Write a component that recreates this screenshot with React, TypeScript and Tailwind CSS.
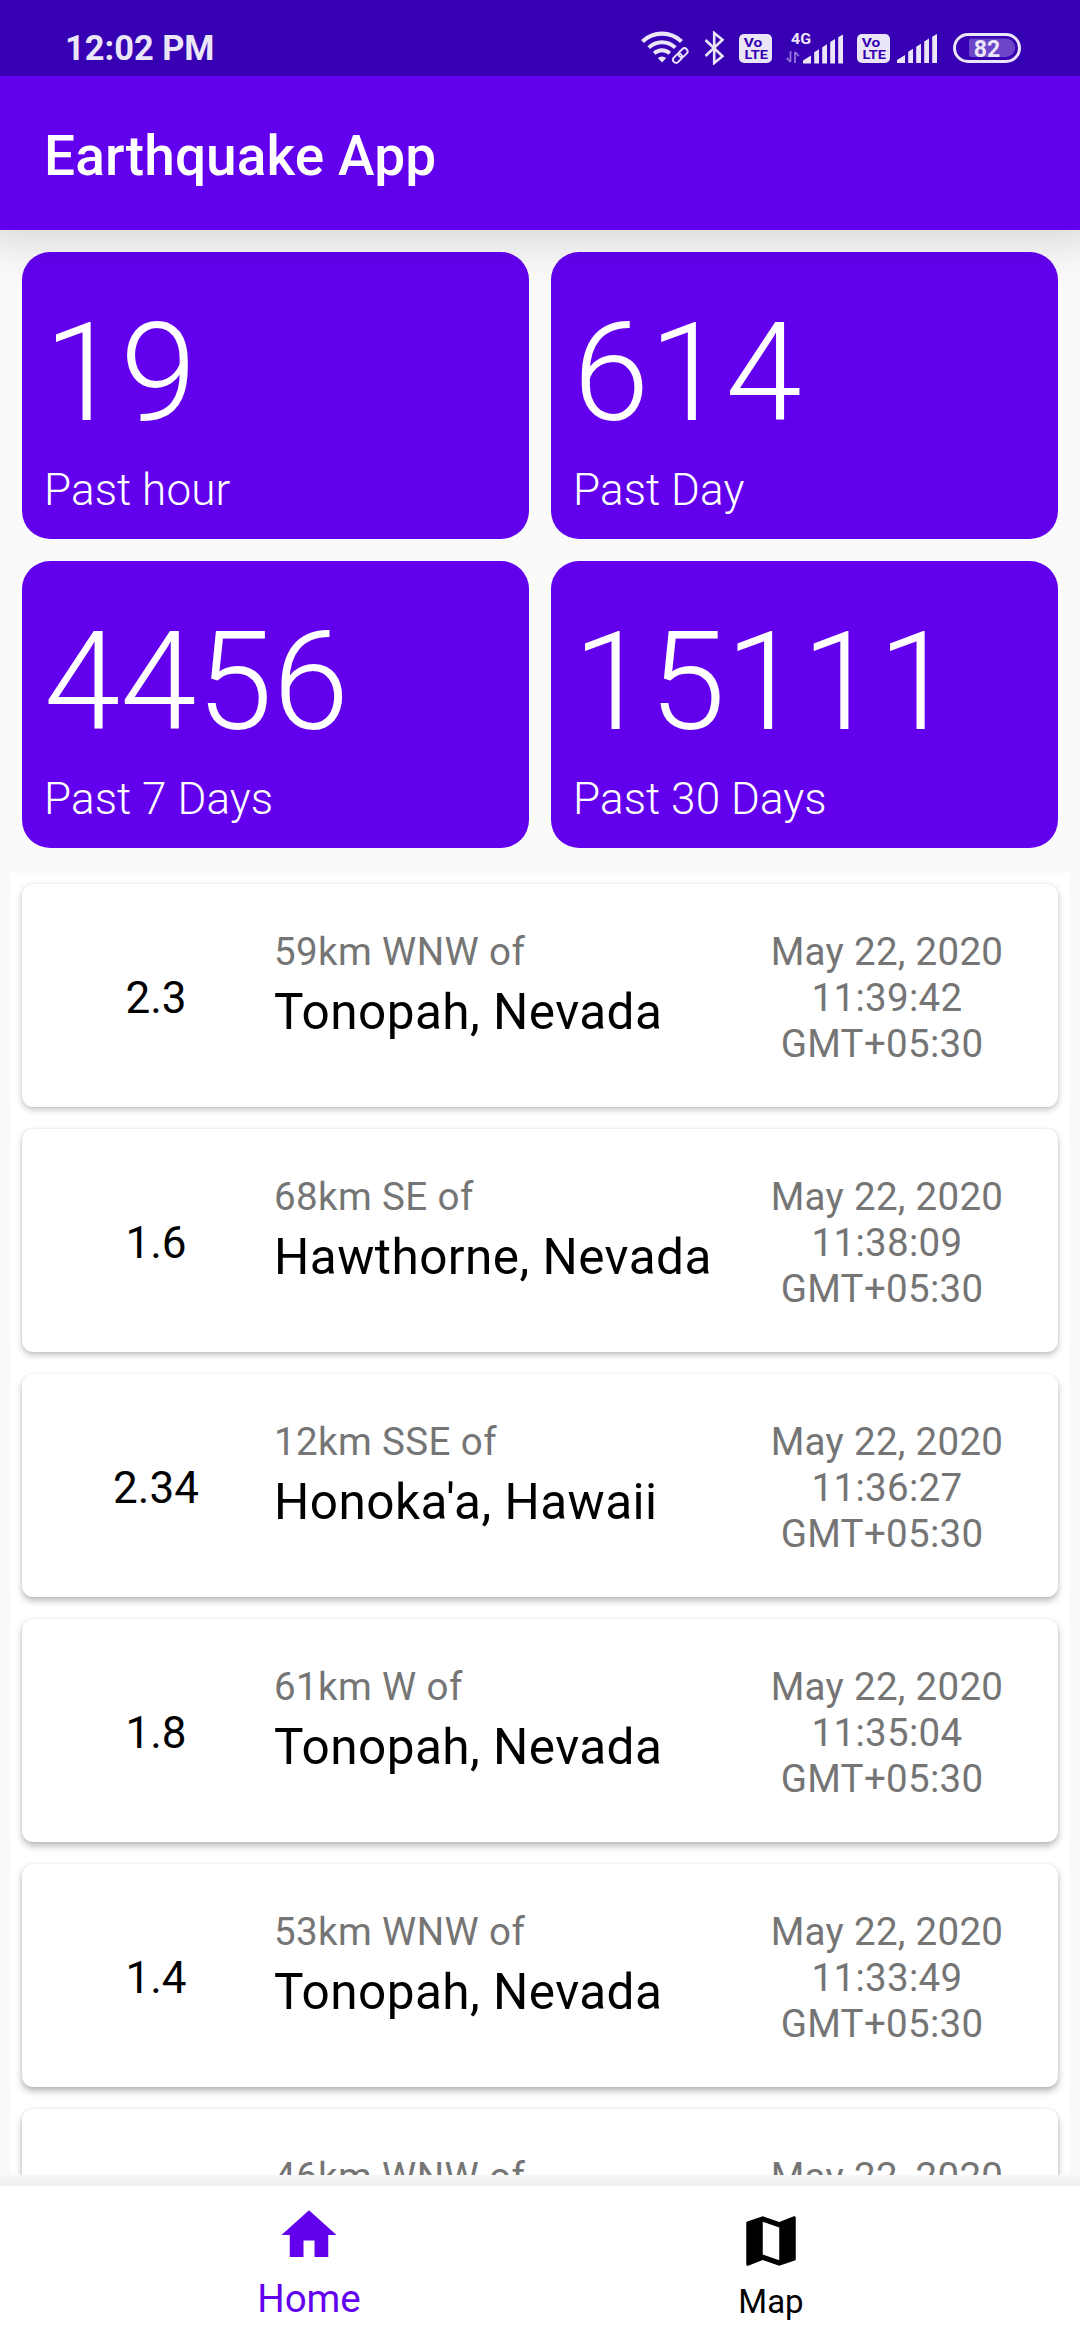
import React from "react";

type Quake = {
  magnitude: string;
  distance: string;
  place: string;
  time: string;
  shadow: string;
};

const stats = [
  { value: "19", label: "Past hour" },
  { value: "614", label: "Past Day" },
  { value: "4456", label: "Past 7 Days" },
  { value: "15111", label: "Past 30 Days" },
];

const quakes: Quake[] = [
  { magnitude: "2.3", distance: "59km WNW of", place: "Tonopah, Nevada", time: "11:39:42", shadow: "shadow-[0_3px_6px_rgba(0,0,0,0.22),0_0_2px_rgba(0,0,0,0.12)]" },
  { magnitude: "1.6", distance: "68km SE of", place: "Hawthorne, Nevada", time: "11:38:09", shadow: "shadow-[0_3px_6px_rgba(0,0,0,0.24),0_0_2px_rgba(0,0,0,0.12)]" },
  { magnitude: "2.34", distance: "12km SSE of", place: "Honoka'a, Hawaii", time: "11:36:27", shadow: "shadow-[0_4px_6px_rgba(0,0,0,0.25),0_0_2px_rgba(0,0,0,0.12)]" },
  { magnitude: "1.8", distance: "61km W of", place: "Tonopah, Nevada", time: "11:35:04", shadow: "shadow-[0_4px_7px_rgba(0,0,0,0.27),0_0_2px_rgba(0,0,0,0.1)]" },
  { magnitude: "1.4", distance: "53km WNW of", place: "Tonopah, Nevada", time: "11:33:49", shadow: "shadow-[0_4px_7px_rgba(0,0,0,0.29),0_0_2px_rgba(0,0,0,0.1)]" },
  { magnitude: "", distance: "46km WNW of", place: "", time: "", shadow: "shadow-[0_4px_7px_rgba(0,0,0,0.3),0_0_2px_rgba(0,0,0,0.1)]" },
];

function WifiIcon() {
  return (
    <svg className="ml-[427px] h-[34px] w-[48px]" viewBox="0 0 48 34" fill="none" stroke="currentColor">
      <path d="M1.5 10.5a28 28 0 0 1 39 0" strokeWidth="4.2" />
      <path d="M7.7 16.6a19 19 0 0 1 26.6 0" strokeWidth="4" />
      <path d="M13.2 22.3a11.5 11.5 0 0 1 15.6 0" strokeWidth="3.8" />
      <path d="M21 31.500l-4.200-4.400a6 6 0 0 1 8.400 0z" fill="currentColor" stroke="none" />
      <path className="text-[#3700b3]" d="M33 31.5l13-13" strokeWidth="10" />
      <g strokeWidth="1.9" transform="rotate(-45 39.3 24.5)">
        <rect x="30.3" y="21.400" width="10.200" height="6.200" rx="3.100" />
        <rect x="38" y="21.400" width="10.200" height="6.200" rx="3.100" />
      </g>
    </svg>
  );
}

function BluetoothIcon() {
  return (
    <svg className="ml-[15px] h-[34px] w-[22px]" viewBox="0 0 22 34" fill="none" stroke="currentColor" strokeWidth="2.600">
      <path d="M1.500 9l17 16.200-8.300 6.800V2l8.300 6.800L1.500 25" />
    </svg>
  );
}

function VolteIcon({ className }: { className: string }) {
  return (
    <svg className={className} viewBox="0 0 33 29">
      <rect width="33" height="29" rx="5" fill="currentColor" />
      <g fill="#3700b3" fontFamily="Roboto, sans-serif" fontWeight="700">
        <text x="4.700" y="12.500" fontSize="12.500" textLength="18.500" lengthAdjust="spacingAndGlyphs">Vo</text>
        <text x="5.500" y="25.200" fontSize="12.800" textLength="23.500" lengthAdjust="spacingAndGlyphs">LTE</text>
      </g>
    </svg>
  );
}

function SignalBars({ className }: { className: string }) {
  return (
    <svg className={className} viewBox="0 0 40 29" fill="currentColor">
      <path d="M0 29v-3l8-5v8zM11.2 17.8l4.8-3V29h-4.8zM19.2 12.7l4.8-3V29h-4.8zM27.2 7.5l4.8-3V29h-4.8zM35.2 2.8l4.8-2.8V29h-4.8z" />
    </svg>
  );
}

function MobileNetwork() {
  return (
    <svg className="ml-[14px] h-[32px] w-[57px] overflow-visible" viewBox="0 0 57 32" fill="currentColor">
      <text x="5" y="12" fontSize="15.5" fontWeight="700" fontFamily="Roboto, sans-serif" textLength="20" lengthAdjust="spacingAndGlyphs">4G</text>
      <path d="M4.5 19v11M0.8 25.8L4.3 30M9 31V20M9.2 20l3.5 4.2" stroke="currentColor" strokeWidth="1.8" fill="none" opacity="0.5" />
      <path transform="translate(17 2.5)" d="M0 29v-3l8-5v8zM11.2 17.8l4.8-3V29h-4.8zM19.2 12.7l4.8-3V29h-4.8zM27.2 7.5l4.8-3V29h-4.8zM35.2 2.8l4.8-2.8V29h-4.8z" />
    </svg>
  );
}

function Battery() {
  return (
    <svg className="ml-[16px] h-[30px] w-[68px]" viewBox="0 0 68 30">
      <rect x="1.5" y="1.5" width="65" height="27" rx="13.5" fill="none" stroke="currentColor" strokeWidth="3" />
      <path d="M16 7.5q0-2 2-2h35a9 9 0 0 1 0 18.5H18q-2 0-2-2z" fill="currentColor" opacity="0.3" />
      <text x="20.700" y="23.600" fontSize="24" fontWeight="700" fill="currentColor" fontFamily="Roboto, sans-serif" textLength="26.500" lengthAdjust="spacingAndGlyphs">82</text>
    </svg>
  );
}

function StatusBar() {
  return (
    <div className="relative z-20 flex h-[76px] shrink-0 items-center bg-[#3700b3] pt-[20px] text-[#ebe5f8]">
      <span className="ml-[65px] w-[149px] whitespace-nowrap text-[34.4px] leading-[40px] font-bold">12:02 PM</span>
      <WifiIcon />
      <BluetoothIcon />
      <VolteIcon className="ml-[13px] h-[29px] w-[33px]" />
      <MobileNetwork />
      <VolteIcon className="ml-[14px] h-[29px] w-[33px]" />
      <SignalBars className="ml-[7px] h-[29px] w-[40px]" />
      <Battery />
    </div>
  );
}

function StatCard({ value, label }: { value: string; label: string }) {
  return (
    <div className="flex h-[287px] flex-col gap-[10px] rounded-[28px] bg-[#6200ee] px-[22px] pt-[41px] font-light text-white">
      <span className="text-[137.5px] leading-[161px]">{value}</span>
      <span className="text-[44px] leading-[52px] tracking-[0.1px]">{label}</span>
    </div>
  );
}

function QuakeCard({ quake }: { quake: Quake }) {
  return (
    <article className={`flex h-[223px] shrink-0 rounded-[11px] bg-white pt-[45px] ${quake.shadow}`}>
      <div className="mt-[43px] w-[252px] pl-[16px] text-center text-[44px] leading-[52px] text-black">{quake.magnitude}</div>
      <div className="flex flex-1 flex-col gap-2 whitespace-nowrap">
        <span className="text-[38.5px] leading-[46px] tracking-[0.4px] text-[#757575]">{quake.distance}</span>
        <span className="text-[49.5px] leading-[58px] tracking-[0.45px] text-black">{quake.place}</span>
      </div>
      <div className="mr-[22px] w-[298px] text-center text-[38.5px] leading-[46px] tracking-[0.3px] text-[#757575]">
        <div>May 22, 2020</div>
        {quake.time && (
          <>
            <div>{quake.time}</div>
            <div>GMT+05:30&nbsp;</div>
          </>
        )}
      </div>
    </article>
  );
}

export default function App() {
  return (
    <div className="flex h-[2340px] w-[1080px] flex-col overflow-hidden bg-[#fafafa] font-[Roboto,sans-serif]">
      <StatusBar />
      <header className="relative z-10 flex h-[154px] shrink-0 items-center bg-[#6200ee] px-[44px] pt-[6px] shadow-[0_-4px_44px_15px_rgba(0,0,0,0.15)]">
        <h1 className="text-[55px] leading-[64px] font-medium tracking-[0.1px] text-white">Earthquake App</h1>
      </header>

      <section className="grid shrink-0 grid-cols-2 gap-[22px] px-[22px] pt-[22px]">
        {stats.map((s) => (
          <StatCard key={s.label} value={s.value} label={s.label} />
        ))}
      </section>

      <main className="mx-[11px] mt-[25px] flex h-[1302px] shrink-0 flex-col gap-[22px] overflow-hidden bg-white px-[11px] pt-[11px]">
        {quakes.map((q) => (
          <QuakeCard key={q.distance} quake={q} />
        ))}
      </main>

      <div className="h-[11px] shrink-0 bg-linear-to-b from-[#f8f8f8] to-[#eeeeee]" />
      <nav className="flex h-[154px] shrink-0 justify-center bg-white">
        <a className="flex w-[462px] flex-col items-center pt-[16px] text-[#6200ee]">
          <svg className="size-[66px]" viewBox="0 0 24 24" fill="currentColor">
            <path d="M10 20v-6h4v6h5v-8h3L12 3 2 12h3v8z" />
          </svg>
          <span className="mt-[8px] text-[38.5px] leading-[46px]">Home</span>
        </a>
        <a className="flex w-[462px] flex-col items-center pt-[22px] text-black">
          <svg className="size-[66px]" viewBox="0 0 24 24" fill="currentColor">
            <path d="M20.5 3l-.16.03L15 5.1 9 3 3.36 4.9c-.21.07-.36.25-.36.48V20.5c0 .28.22.5.5.5l.16-.03L9 18.9l6 2.1 5.64-1.9c.21-.07.36-.25.36-.48V3.5c0-.28-.22-.5-.5-.5zM15 19l-6-2.11V5l6 2.11V19z" />
          </svg>
          <span className="mt-[8px] text-[33px] leading-[39px]">Map</span>
        </a>
      </nav>
    </div>
  );
}
